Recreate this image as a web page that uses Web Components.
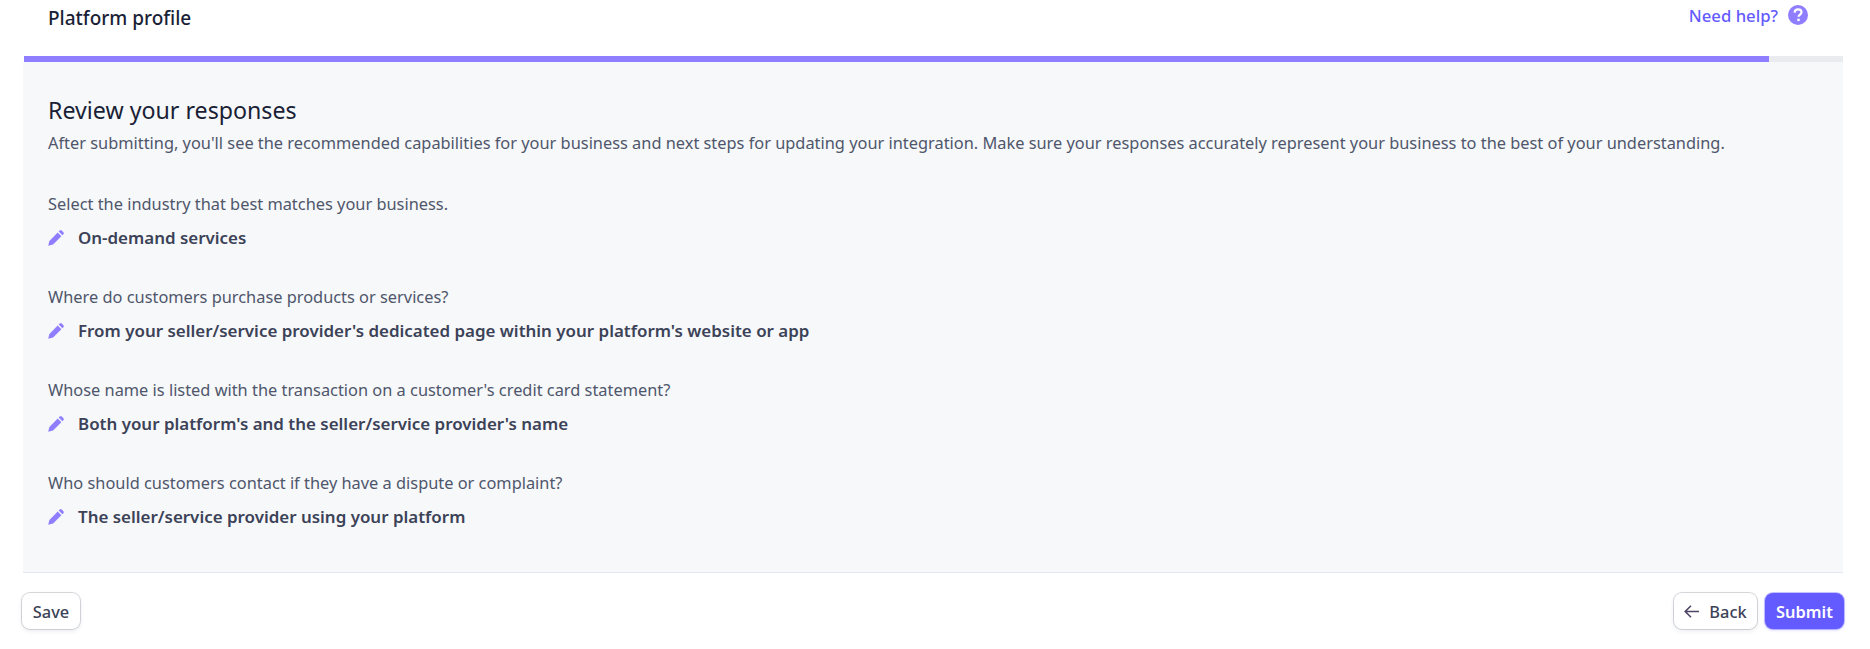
<!DOCTYPE html>
<html>
<head>
<meta charset="utf-8">
<style>
  html, body { margin: 0; background: #fff; }
  body { font-family: "Noto Sans", "Open Sans", sans-serif; color: #3c4257; }
</style>
</head>
<body>
<profile-page>
  <span slot="title">Platform profile</span>
  <review-item question="Select the industry that best matches your business." answer="On-demand services"></review-item>
  <review-item question="Where do customers purchase products or services?" answer="From your seller/service provider's dedicated page within your platform's website or app"></review-item>
  <review-item question="Whose name is listed with the transaction on a customer's credit card statement?" answer="Both your platform's and the seller/service provider's name"></review-item>
  <review-item question="Who should customers contact if they have a dispute or complaint?" answer="The seller/service provider using your platform"></review-item>
</profile-page>

<script>
class AppButton extends HTMLElement {
    constructor() {
        super();
        this.attachShadow({ mode: "open" });
    }

    connectedCallback() {
        const variant = this.getAttribute('variant') || 'default';
        this.shadowRoot.innerHTML = `
            <style>
                :host { display: inline-block; }
                .btn {
                    display: inline-flex;
                    align-items: center;
                    justify-content: center;
                    box-sizing: border-box;
                    height: 36px;
                    width: var(--btn-width, auto);
                    border-radius: 8px;
                    font: 500 16.4px "Noto Sans", sans-serif;
                }
                .btn--default {
                    background: #fff;
                    color: #3c4257;
                    box-shadow: 0 0 0 1px rgba(60,66,87,.2), 0 2px 5px rgba(60,66,87,.1);
                }
                .btn--primary {
                    background: #635bff;
                    color: #fff;
                    font-weight: 600;
                    box-shadow: 0 0 0 1px rgba(99,91,255,.35), 0 1px 3px rgba(99,91,255,.3);
                }
            </style>
            <div class="btn btn--${variant}"><slot></slot></div>
        `;
    }
}
customElements.define("app-button", AppButton);

class ReviewItem extends HTMLElement {
    constructor() {
        super();
        this.attachShadow({ mode: "open" });
    }

    connectedCallback() {
        const question = this.getAttribute('question');
        const answer = this.getAttribute('answer');
        this.shadowRoot.innerHTML = `
            <style>
                :host { display: block; margin-bottom: 35px; }
                .question { font-size: 16.37px; line-height: 24px; color: #4f566b; }
                .answer {
                    display: flex;
                    align-items: center;
                    gap: 14px;
                    margin-top: 10px;
                    font-size: 16.93px;
                    line-height: 24px;
                    font-weight: 600;
                    color: #3c4257;
                }
                svg { display: block; flex: none; }
            </style>
            <div class="question">${question}</div>
            <div class="answer">
                <svg width="16" height="16" viewBox="0 0 16 16" fill="#8f7eff">
                    <path d="M0.2 15.8 L1.4 10.9 L9.7 2.6 L13.4 6.3 L5.1 14.6 Z"/>
                    <path d="M10.7 1.6 L11.7 0.6 C12.3 0 13.2 0 13.8 0.6 L15.4 2.2 C16 2.8 16 3.7 15.4 4.3 L14.4 5.3 Z"/>
                </svg>
                <span>${answer}</span>
            </div>
        `;
    }
}
customElements.define("review-item", ReviewItem);

class ProfilePage extends HTMLElement {
    constructor() {
        super();
        this.attachShadow({ mode: "open" });
    }

    connectedCallback() {
        this.shadowRoot.innerHTML = `
            <style>
                :host { display: block; height: 649px; overflow: hidden; }
                .top {
                    display: flex;
                    justify-content: space-between;
                    align-items: center;
                    height: 36px;
                    padding: 0 62px 0 48px;
                }
                .title { font-size: 19px; font-weight: 500; color: #1a1f36; }
                .help {
                    display: flex;
                    align-items: center;
                    gap: 10px;
                    font-size: 16.7px;
                    font-weight: 500;
                    color: #635bff;
                    margin-top: -6px;
                }
                .help svg { display: block; }
                .track { height: 6px; margin: 20px 27px 0 24px; background: #e9ebef; }
                .fill { width: 1745px; height: 6px; background: #8f7eff; }
                .panel {
                    margin: 0 27px 0 23px;
                    height: 511px;
                    box-sizing: border-box;
                    padding: 32px 25px 0;
                    background: #f6f8fa;
                    border-bottom: 1px solid #e3e8ee;
                }
                h2 { margin: 0; font-size: 23.2px; line-height: 32px; font-weight: 400; color: #1a1f36; }
                .lead { margin: 5px 0 37px; font-size: 16.37px; line-height: 24px; color: #4f566b; white-space: nowrap; }
                .bottom {
                    display: flex;
                    justify-content: space-between;
                    padding: 20px 26px 0 22px;
                }
                .right { display: flex; gap: 8px; }
                .back { display: inline-flex; align-items: center; gap: 10px; }
                .back svg { display: block; }
            </style>
            <div class="top">
                <div class="title"><slot name="title"></slot></div>
                <div class="help">Need help?
                    <svg width="20" height="20" viewBox="0 0 20 20">
                        <circle cx="10" cy="10" r="10" fill="#8f7eff"/>
                        <path d="M6.6 7.6 C6.7 5.5 8.2 4.4 10.1 4.4 C12 4.4 13.5 5.5 13.5 7.3 C13.5 9.6 10.6 9.7 10.6 11.8" fill="none" stroke="#fff" stroke-width="2.2"/>
                        <circle cx="10.5" cy="14.9" r="1.4" fill="#fff"/>
                    </svg>
                </div>
            </div>
            <div class="track"><div class="fill"></div></div>
            <div class="panel">
                <h2>Review your responses</h2>
                <p class="lead">After submitting, you'll see the recommended capabilities for your business and next steps for updating your integration. Make sure your responses accurately represent your business to the best of your understanding.</p>
                <slot></slot>
            </div>
            <div class="bottom">
                <app-button style="--btn-width:58px">Save</app-button>
                <div class="right">
                    <app-button style="--btn-width:83px">
                        <span class="back">
                            <svg width="15" height="13" viewBox="0 0 15 13" fill="none" stroke="#4f4566" stroke-width="1.6">
                                <path d="M15 6.5 H1.2 M7 .7 L1.2 6.5 L7 12.3"/>
                            </svg>
                            Back
                        </span>
                    </app-button>
                    <app-button variant="primary" style="--btn-width:79px">Submit</app-button>
                </div>
            </div>
        `;
    }
}
customElements.define("profile-page", ProfilePage);
</script>
</body>
</html>
